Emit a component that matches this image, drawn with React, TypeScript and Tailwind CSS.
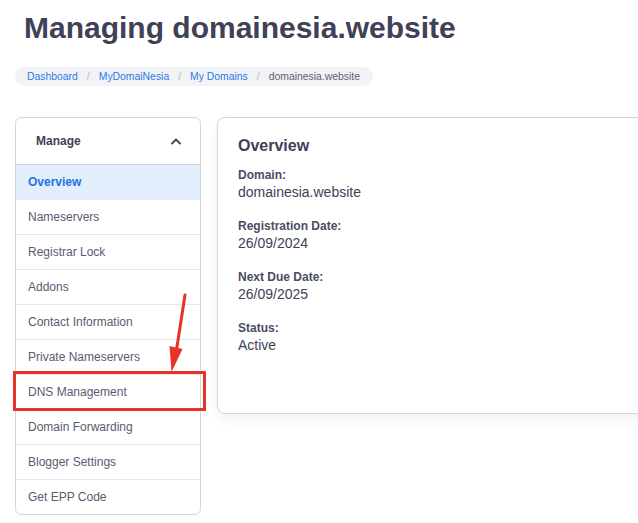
import React from "react";

const items = [
  "Overview",
  "Nameservers",
  "Registrar Lock",
  "Addons",
  "Contact Information",
  "Private Nameservers",
  "DNS Management",
  "Domain Forwarding",
  "Blogger Settings",
  "Get EPP Code",
];

const fields: [string, string][] = [
  ["Domain:", "domainesia.website"],
  ["Registration Date:", "26/09/2024"],
  ["Next Due Date:", "26/09/2025"],
  ["Status:", "Active"],
];

export default function App() {
  return (
    <div
      className="relative w-[638px] h-[523px] overflow-hidden bg-white"
      style={{ fontFamily: '"Liberation Sans", Arial, sans-serif' }}
    >
      <div className="pt-[10px] pl-[24px]">
        <h1 className="text-[30px] leading-[36px] font-bold text-[#3f4156]">
          Managing domainesia.website
        </h1>
      </div>
      <div className="pl-[15px] mt-[17px]">
        <div className="inline-flex items-center h-[19px] rounded-full bg-[#f2f3f6] pl-[12px] pr-[13px] text-[10.4px] leading-[19px]">
          <span className="text-[#2b7be6]">Dashboard</span>
          <span className="text-[#b8bac4] px-[9px]">/</span>
          <span className="text-[#2b7be6]">MyDomaiNesia</span>
          <span className="text-[#b8bac4] px-[9px]">/</span>
          <span className="text-[#2b7be6]">My Domains</span>
          <span className="text-[#b8bac4] px-[9px]">/</span>
          <span className="text-[#5d6070]">domainesia.website</span>
        </div>
      </div>

      <div className="flex items-start gap-[16px] pl-[15px] mt-[30px]">
        <div className="w-[186px] shrink-0 rounded-[6px] border border-[#d4d6dd] bg-white overflow-hidden">
          <div className="h-[46px] flex items-center justify-between pl-[20px] pr-[18px]">
            <span className="text-[12px] font-bold text-[#3f4156]">Manage</span>
            <svg width="12" height="8" viewBox="0 0 12 8" fill="none">
              <path d="M2 6.5 L6 2.5 L10 6.5" stroke="#3f4156" strokeWidth="1.8" strokeLinecap="round" strokeLinejoin="round" />
            </svg>
          </div>
          {items.map((it, i) => (
            <div
              key={it}
              className={
                i === 0
                  ? "h-[35px] flex items-center pl-[12px] border-t border-[#d4d6dd] bg-[#e2eefc] text-[12px] font-bold text-[#1f72e3]"
                  : "h-[35px] flex items-center pl-[12px] border-t border-[#e8e9ee] text-[12px] text-[#585c70]"
              }
            >
              {it}
            </div>
          ))}
        </div>

        <div className="w-[450px] shrink-0 h-[297px] rounded-[8px] border border-[#d4d6dd] bg-white shadow-[0_6px_14px_rgba(0,0,0,0.05)] pt-[18px] pl-[20px]">
          <h2 className="text-[16px] leading-[20px] font-bold text-[#3f4156]">Overview</h2>
          <div className="mt-[11px] flex flex-col gap-[17px]">
            {fields.map(([l, v]) => (
              <div key={l}>
                <div className="text-[12px] leading-[16px] font-bold text-[#4a4d5f]">{l}</div>
                <div className="text-[14px] leading-[18px] text-[#3f4156]">{v}</div>
              </div>
            ))}
          </div>
        </div>
      </div>

      {/* annotation overlay */}
      <div className="absolute left-[13px] top-[371px] w-[193px] h-[40px] border-[3px] border-[#e5332a]" />
      <svg className="absolute left-0 top-0" width="638" height="523" viewBox="0 0 638 523" fill="none">
        <line x1="185" y1="295" x2="176.5" y2="350" stroke="#e5332a" strokeWidth="3" strokeLinecap="round" />
        <polygon points="169.5,346 182.5,349 171.5,372" fill="#e5332a" />
      </svg>
    </div>
  );
}
